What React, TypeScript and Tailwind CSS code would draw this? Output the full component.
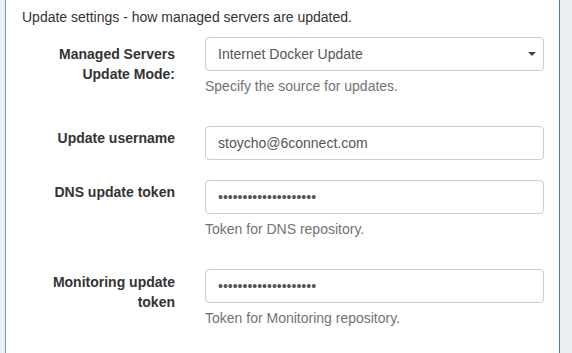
const FONT = { fontFamily: '"Liberation Sans", Arial, sans-serif' };

function Help({ children }: { children: React.ReactNode }) {
  return <p className="mt-[5px] mb-[10px] text-[14px] leading-[20px] text-[#737373]">{children}</p>;
}

function Row({ label, labelPad, children }: { label: React.ReactNode; labelPad: string; children: React.ReactNode }) {
  return (
    <div className="flex mb-[20px]">
      <div className={`w-[184px] shrink-0 pr-[15px] text-right text-[14px] leading-[20px] font-bold text-[#333] ${labelPad}`}>{label}</div>
      <div className="flex-1 px-[15px]">{children}</div>
    </div>
  );
}

const inputCls =
  'block w-full h-[34px] px-[12px] py-[6px] text-[14px] leading-[20px] text-[#555] bg-white border border-[#ccc] rounded-[4px] outline-none';

export default function App() {
  return (
    <div className="w-[572px] h-[353px] overflow-hidden bg-[#ecf0f5] pl-[5px] pr-[12px]" style={FONT}>
      <div className="h-full bg-white border-l border-l-[#7d96ae] border-r border-r-[#3c7fc0]">
        <p className="pl-[16px] pt-[7px] text-[14px] leading-[20px] text-[#333]">
          Update settings - how managed servers are updated.
        </p>
        <form className="mt-[10px]">
          <Row
            labelPad="pt-[7px]"
            label={
              <>
                Managed Servers
                <br />
                Update Mode:
              </>
            }
          >
            <div className="relative">
              <select className={`${inputCls} appearance-none`} style={FONT} defaultValue="docker">
                <option value="docker">Internet Docker Update</option>
                <option value="local">Local Update</option>
              </select>
              <span className="pointer-events-none absolute right-[8px] top-[15px] w-0 h-0 border-l-[4px] border-r-[4px] border-t-[4px] border-l-transparent border-r-transparent border-t-[#444]" />
            </div>
            <Help>Specify the source for updates.</Help>
          </Row>
          <Row labelPad="pt-[2px]" label="Update username">
            <input className={inputCls} style={FONT} defaultValue="stoycho@6connect.com" readOnly />
          </Row>
          <Row labelPad="pt-[2px]" label="DNS update token">
            <input type="password" className={inputCls} style={FONT} defaultValue="abcdefghijklmnopqrst" readOnly />
            <Help>Token for DNS repository.</Help>
          </Row>
          <Row
            labelPad="pt-[3px]"
            label={
              <>
                Monitoring update
                <br />
                token
              </>
            }
          >
            <input type="password" className={inputCls} style={FONT} defaultValue="abcdefghijklmnopqrst" readOnly />
            <Help>Token for Monitoring repository.</Help>
          </Row>
        </form>
      </div>
    </div>
  );
}
